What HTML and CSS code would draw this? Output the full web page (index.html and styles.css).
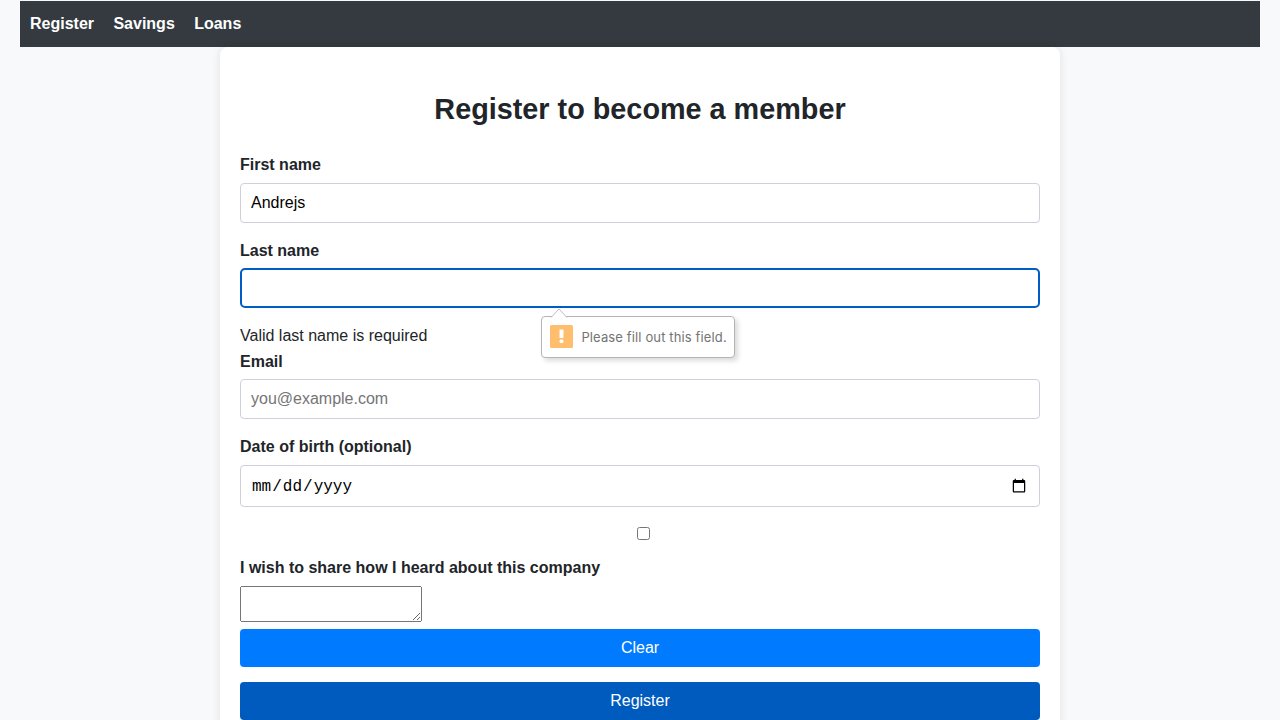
FILE: index.html
```html
<!DOCTYPE html>
<html lang="en">
<head>
<meta charset="utf-8">
<title>Register</title>
<link rel="stylesheet" href="styles.css">
</head>
<body>
<nav class="navbar"><a>Register</a><a>Savings</a><a>Loans</a></nav>
<main class="container">
<h1>Register to become a member</h1>
<form class="form">
<label>First name</label>
<input class="control" type="text" value="Andrejs">
<label>Last name</label>
<div class="field">
<input class="control focused" type="text">
<div class="bubble">
<svg class="arrow" width="18" height="10" viewBox="0 0 18 10"><path d="M1 9.5L9 1L17 9.5" fill="#fff" stroke="#bebebe"/></svg>
<svg class="alert" width="23" height="23" viewBox="0 0 23 23"><rect width="23" height="23" rx="1.5" fill="#ffbd6e"/><path d="M9.5 4.5h4v8.5h-4z" fill="#fff"/><circle cx="11.5" cy="16.3" r="2" fill="#fff"/></svg>
<span>Please fill out this field.</span>
</div>
</div>
<div class="feedback">Valid last name is required</div>
<label>Email</label>
<input class="control" type="email" placeholder="you@example.com">
<label>Date of birth (optional)</label>
<input class="control date" type="date">
<input class="check" type="checkbox">
<label>I wish to share how I heard about this company</label>
<textarea class="area"></textarea>
<button class="btn" type="button">Clear</button>
<button class="btn dark" type="button">Register</button>
</form>
</main>
</body>
</html>
```
FILE: styles.css
```css
* { box-sizing: border-box; }
html { overflow: hidden; }
body { margin: 0; padding: 1px 20px 0; height: 720px; overflow: hidden; background: #f8f9fb; color: #212529; font: 16px/25.6px "Liberation Sans", Arial, sans-serif; }
.navbar { display: flex; gap: 19.4px; height: 46px; padding: 10px; background: #343a40; color: #fff; font-weight: bold; }
.container { width: 840px; margin: 0 auto; padding: 20px; background: #fff; border-radius: 8px; box-shadow: 0 0 10px rgba(0,0,0,.1); }
h1 { margin: 19px 0 20px; font-size: 28.8px; line-height: 46px; text-align: center; }
.form { display: flex; flex-direction: column; }
label { height: 25.6px; margin-bottom: 5px; font-weight: bold; }
.control { display: block; width: 100%; height: 40px; margin: 0 0 15px; padding: 10px; border: 1px solid #ced0da; border-radius: 4px; background: #fff; font: 16px "Liberation Sans", Arial, sans-serif; }
.field { position: relative; }
.focused { border: 2px solid #005dc5; border-radius: 5px; outline: none; }
.feedback { height: 25.6px; }
.date { height: 42px; padding: 11px 10px 9px; font-family: "Liberation Mono", monospace; }
.date::-webkit-calendar-picker-indicator { margin-top: -2px; }
.check { width: 13px; height: 13px; margin: 5px 0 15px 397px; }
.area { width: 182px; height: 36px; margin: 0 0 7px; }
.btn { height: 38px; margin: 0 0 15px; border: 0; border-radius: 4px; background: #007bff; color: #fff; font: 16px "Liberation Sans", Arial, sans-serif; }
.dark { background: #005bbf; }
.bubble { position: absolute; left: 301.4px; top: 48px; width: 194px; height: 42px; display: flex; align-items: center; gap: 8px; padding: 0 0 1px 8px; border: 1px solid #b4b4b4; border-radius: 4px; background: #fff; box-shadow: 3px 3px 5px rgba(0,0,0,.14); color: #737373; font: 13px Inter, sans-serif; letter-spacing: .13px; white-space: nowrap; }
.arrow { position: absolute; left: 8px; top: -9.5px; }
.alert { flex: none; }
```
